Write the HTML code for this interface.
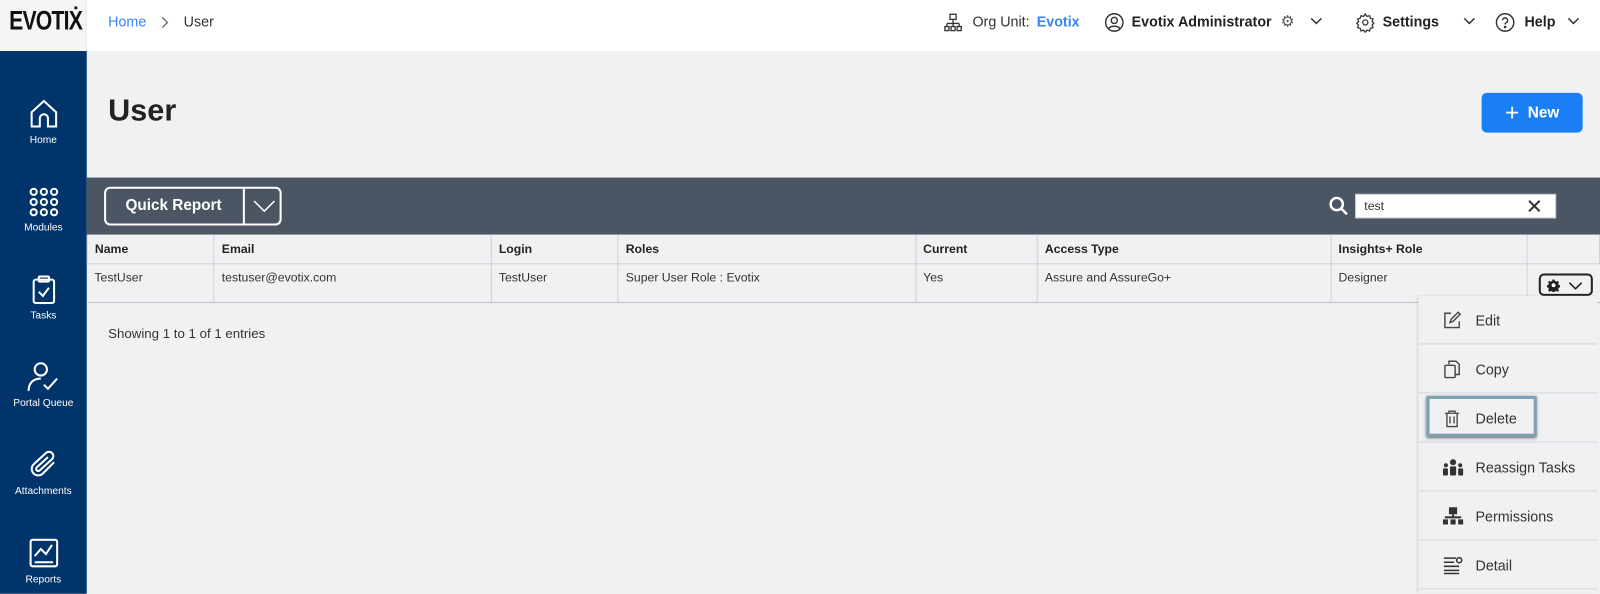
<!DOCTYPE html><html style="height:594px;overflow:hidden"><head><style>
*{box-sizing:border-box;margin:0;padding:0}
body{width:1600px;height:594px;overflow:hidden;font-family:"Liberation Sans",sans-serif;background:#f0f1f3;position:relative;color:#222}
#w{position:absolute;left:0;top:0;width:1568px;height:582px;overflow:hidden;transform:scale(1.020408);transform-origin:0 0}
.sb{position:absolute;left:0;top:0;width:85px;height:582px;background:#00346b;color:#fff}
.logo{position:absolute;left:0;top:0;width:85px;height:50px;background:#f4f5f6;text-align:center;line-height:50px;overflow:hidden}
.logo span{display:inline-block;font:bold 26px "Liberation Sans Narrow","Liberation Sans",sans-serif;color:#111;letter-spacing:-1px;transform:scaleX(.8)}
.ni{position:absolute;left:0;width:85px;text-align:center;font-size:10px}
.ni svg{display:block;margin:0 auto 6px}
.top{position:absolute;left:85px;top:0;right:0;height:50px;background:#fff;font-size:14px}
.a{position:absolute;top:13px}
.tb{position:absolute;left:85px;right:0;top:174px;height:56px;background:#4b5563}
table{position:absolute;left:85px;top:230px;width:1483px;border-collapse:collapse;font-size:12px}
th{height:28px;text-align:left;padding-left:7px;border:1px solid #cfd2d6;border-top:0;font-weight:bold;background:#f0f1f3}
td{height:38px;vertical-align:top;padding:6px 7px;border-right:1px solid #cfd2d6;border-bottom:1px solid #bfc2c6;color:#333}
.menu{position:absolute;left:1390px;top:290px;width:175px;height:292px;background:#f0f1f3;box-shadow:-1px 0 3px rgba(0,0,0,.15);overflow:hidden}
.mi{height:48px;border-bottom:2px solid #e1e3e6;position:relative;font-size:14px;line-height:48px;padding-left:56px;color:#333}
.mi svg{position:absolute;left:24px;top:15px}
.chev{position:absolute;top:17px}
</style></head><body><div id="w">
<div class="sb">
<div class="logo"><span>EVOTIẊ</span></div>
<div class="ni" style="top:96px"><svg width="30" height="30" viewBox="0 0 30 30" fill="none" stroke="#fff" stroke-width="2"><path d="M3 14L15 3l12 11v14H19v-8a4 4 0 0 0-8 0v8H3z"/></svg>Home</div>
<div class="ni" style="top:184px"><svg width="30" height="28" viewBox="0 0 30 28" fill="none" stroke="#fff" stroke-width="2"><circle cx="5" cy="4" r="3"/><circle cx="15" cy="4" r="3"/><circle cx="25" cy="4" r="3"/><circle cx="5" cy="14" r="3"/><circle cx="15" cy="14" r="3"/><circle cx="25" cy="14" r="3"/><circle cx="5" cy="24" r="3"/><circle cx="15" cy="24" r="3"/><circle cx="25" cy="24" r="3"/></svg>Modules</div>
<div class="ni" style="top:270px"><svg width="24" height="28" viewBox="0 0 24 28" fill="none" stroke="#fff" stroke-width="2"><rect x="2" y="4" width="20" height="23" rx="2"/><rect x="7" y="1" width="10" height="5" rx="1"/><path d="M7 16l4 4 6-8"/></svg>Tasks</div>
<div class="ni" style="top:354px"><svg width="34" height="30" viewBox="0 0 34 30" fill="none" stroke="#fff" stroke-width="2"><circle cx="14" cy="8" r="6"/><path d="M2 29c0-8 5-12 12-12"/><path d="M17 23l4 4 9-10"/></svg>Portal Queue</div>
<div class="ni" style="top:440px"><svg width="30" height="30" viewBox="0 0 30 30" fill="none" stroke="#fff" stroke-width="2"><path d="M25 13L14 24a6 6 0 0 1-9-9L17 4a4 4 0 0 1 6 6L11 21a2 2 0 0 1-3-3L19 8"/></svg>Attachments</div>
<div class="ni" style="top:527px"><svg width="30" height="30" viewBox="0 0 30 30" fill="none" stroke="#fff" stroke-width="2"><rect x="2" y="2" width="26" height="26" rx="2"/><path d="M6 18l6-7 5 5 6-9M6 24h18"/></svg>Reports</div>
</div>
<div class="top">
<span class="a" style="left:21px;color:#3b82f6">Home</span>
<svg class="chev" style="left:73px;top:16px" width="8" height="12" viewBox="0 0 8 12" fill="none" stroke="#666" stroke-width="1.3"><path d="M1 1l5 5-5 5"/></svg>
<span class="a" style="left:95px;color:#333">User</span>
<svg class="a" style="left:840px;top:13px" width="18" height="18" viewBox="0 0 18 18" fill="none" stroke="#333" stroke-width="1.3"><rect x="6" y="1" width="6" height="5"/><path d="M9 6v4M3 10h12M3 10v3M9 10v3M15 10v3"/><rect x="1" y="13" width="4" height="4"/><rect x="7" y="13" width="4" height="4"/><rect x="13" y="13" width="4" height="4"/></svg>
<span class="a" style="left:868px;color:#333">Org Unit:</span><span class="a" style="left:931px;color:#3b82f6;font-weight:bold">Evotix</span>
<svg class="a" style="left:997px;top:12px" width="20" height="20" viewBox="0 0 20 20" fill="none" stroke="#333" stroke-width="1.4"><circle cx="10" cy="10" r="8.5"/><circle cx="10" cy="8" r="3"/><path d="M4.5 16c2-3 9-3 11 0"/></svg>
<span class="a" style="left:1024px;font-weight:bold">Evotix Administrator</span>
<span class="a" style="left:1170px;top:12px;font-size:15px;color:#555">⚙</span>
<svg class="chev" style="left:1199px" width="12" height="8" viewBox="0 0 12 8" fill="none" stroke="#333" stroke-width="1.5"><path d="M1 1l5 5 5-5"/></svg>
<svg class="a" style="left:1243px;top:12px" width="20" height="20" viewBox="0 0 24 24" fill="none" stroke="#333" stroke-width="1.5"><circle cx="12" cy="12" r="3"/><path d="M12 2l2 3 3-1 1 3 3 1-1 3 2 2-2 2 1 3-3 1-1 3-3-1-2 3-2-3-3 1-1-3-3-1 1-3-2-2 2-2-1-3 3-1 1-3 3 1z"/></svg>
<span class="a" style="left:1270px;font-weight:bold">Settings</span>
<svg class="chev" style="left:1349px" width="12" height="8" viewBox="0 0 12 8" fill="none" stroke="#333" stroke-width="1.5"><path d="M1 1l5 5 5-5"/></svg>
<svg class="a" style="left:1380px;top:12px" width="20" height="20" viewBox="0 0 20 20" fill="none" stroke="#333" stroke-width="1.4"><circle cx="10" cy="10" r="8.5"/><path d="M7.5 8a2.5 2.5 0 1 1 3.5 2.3c-.8.4-1 1-1 1.7"/><circle cx="10" cy="14.5" r=".6" fill="#333"/></svg>
<span class="a" style="left:1409px;font-weight:bold">Help</span>
<svg class="chev" style="left:1451px" width="12" height="8" viewBox="0 0 12 8" fill="none" stroke="#333" stroke-width="1.5"><path d="M1 1l5 5 5-5"/></svg>
</div>
<div style="position:absolute;left:106px;top:92px;font-size:30px;font-weight:bold;color:#222">User</div>
<div style="position:absolute;left:1452px;top:91px;width:99px;height:39px;background:#1a7ff5;border-radius:5px;color:#fff;font-weight:bold;font-size:15px;line-height:39px;text-align:center"><span style="font-size:24px;font-weight:normal;vertical-align:-3px">+</span>&nbsp; New</div>
<div class="tb">
<div style="position:absolute;left:17px;top:9px;width:174px;height:38px;border:2px solid #fff;border-radius:6px;color:#fff;font-weight:bold;font-size:15px;line-height:34px"><span style="padding-left:19px">Quick Report</span><span style="position:absolute;left:134px;top:0;height:34px;border-left:2px solid #fff;width:36px"><svg style="margin:10px 0 0 8px" width="22" height="14" viewBox="0 0 22 14" fill="none" stroke="#fff" stroke-width="1.5"><path d="M1 2l10 10 10-10"/></svg></span></div>
<svg style="position:absolute;left:1217px;top:18px" width="20" height="20" viewBox="0 0 20 20" fill="none" stroke="#fff" stroke-width="2.4"><circle cx="8" cy="8" r="6"/><path d="M12.5 12.5L18 18"/></svg>
<div style="position:absolute;left:1243px;top:16px;width:197px;height:24px;background:#fff;border:1px solid #ccc;font-size:12px;padding:4px 8px;color:#333">test<span style="position:absolute;right:12px;top:-1px;font-size:20px">✕</span></div>
</div>
<table><tr><th style="width:125px">Name</th><th style="width:273px">Email</th><th style="width:125px">Login</th><th style="width:294px">Roles</th><th style="width:120px">Current</th><th style="width:290px">Access Type</th><th style="width:193px">Insights+ Role</th><th></th></tr>
<tr><td>TestUser</td><td>testuser@evotix.com</td><td>TestUser</td><td>Super User Role : Evotix</td><td>Yes</td><td>Assure and AssureGo+</td><td>Designer</td><td style="border-right:0"><div style="margin:3px 0 0 4px;width:53px;height:22px;border:2px solid #222;border-radius:5px;position:relative"><svg style="position:absolute;left:6px;top:3px" width="13" height="13" viewBox="0 0 24 24"><path fill="#222" d="M10 1h4l1 3 3 1.5 3-1.5 2.5 2.5-1.5 3 1 3 3 1v4l-3 1-1 3 1.5 3-2.5 2.5-3-1.5-3 1-1 3h-4l-1-3-3-1-3 1.5-2.5-2.5 1.5-3-1-3-3-1v-4l3-1 1-3-1.5-3 2.5-2.5 3 1.5 3-1.5z" transform="scale(.85) translate(2 1)"/><circle cx="12" cy="12" r="3.5" fill="#fff"/></svg><svg style="position:absolute;left:27px;top:6px" width="14" height="8" viewBox="0 0 14 8" fill="none" stroke="#222" stroke-width="1.5"><path d="M1 1l6 6 6-6"/></svg></div></td></tr></table>
<div style="position:absolute;left:106px;top:319px;font-size:13px;color:#333">Showing 1 to 1 of 1 entries</div>
<div class="menu">
<div class="mi"><svg width="18" height="18" viewBox="0 0 18 18" fill="none" stroke="#444" stroke-width="1.4"><path d="M8 2H2v14h14v-6M7 11l1-3 7-7 2 2-7 7z"/></svg>Edit</div>
<div class="mi"><svg width="18" height="18" viewBox="0 0 18 18" fill="none" stroke="#444" stroke-width="1.4"><path d="M6 4V1h7l3 3v10h-4"/><rect x="2" y="5" width="10" height="12" rx="1"/></svg>Copy</div>
<div class="mi"><div style="position:absolute;left:8px;top:2px;width:108px;height:40px;border:3px solid #7ea1b4;box-shadow:0 1px 3px #444"></div><svg width="18" height="18" viewBox="0 0 18 18" fill="none" stroke="#444" stroke-width="1.3"><path d="M2 4h14M6 4V2h6v2M4 4v13h10V4M7 7v7M11 7v7"/></svg>Delete</div>
<div class="mi"><svg width="20" height="18" viewBox="0 0 20 18" fill="#333"><circle cx="10" cy="4" r="3"/><circle cx="3" cy="7" r="2"/><circle cx="17" cy="7" r="2"/><rect x="7" y="8" width="6" height="9" rx="1"/><rect x="0" y="10" width="5" height="7" rx="1"/><rect x="15" y="10" width="5" height="7" rx="1"/></svg>Reassign Tasks</div>
<div class="mi"><svg width="20" height="18" viewBox="0 0 20 18" fill="#333"><rect x="6" y="0" width="8" height="7"/><rect x="9" y="7" width="2" height="3"/><rect x="2" y="9" width="16" height="2"/><rect x="0" y="12" width="5" height="5"/><rect x="7.5" y="12" width="5" height="5"/><rect x="15" y="12" width="5" height="5"/></svg>Permissions</div>
<div class="mi"><svg width="20" height="18" viewBox="0 0 20 18" fill="none" stroke="#333" stroke-width="1.5"><path d="M1 2h12M1 6h10M1 10h15M1 14h15M1 17h15"/><circle cx="16" cy="4" r="2.5"/></svg>Detail</div>
</div>
</div></body></html>
